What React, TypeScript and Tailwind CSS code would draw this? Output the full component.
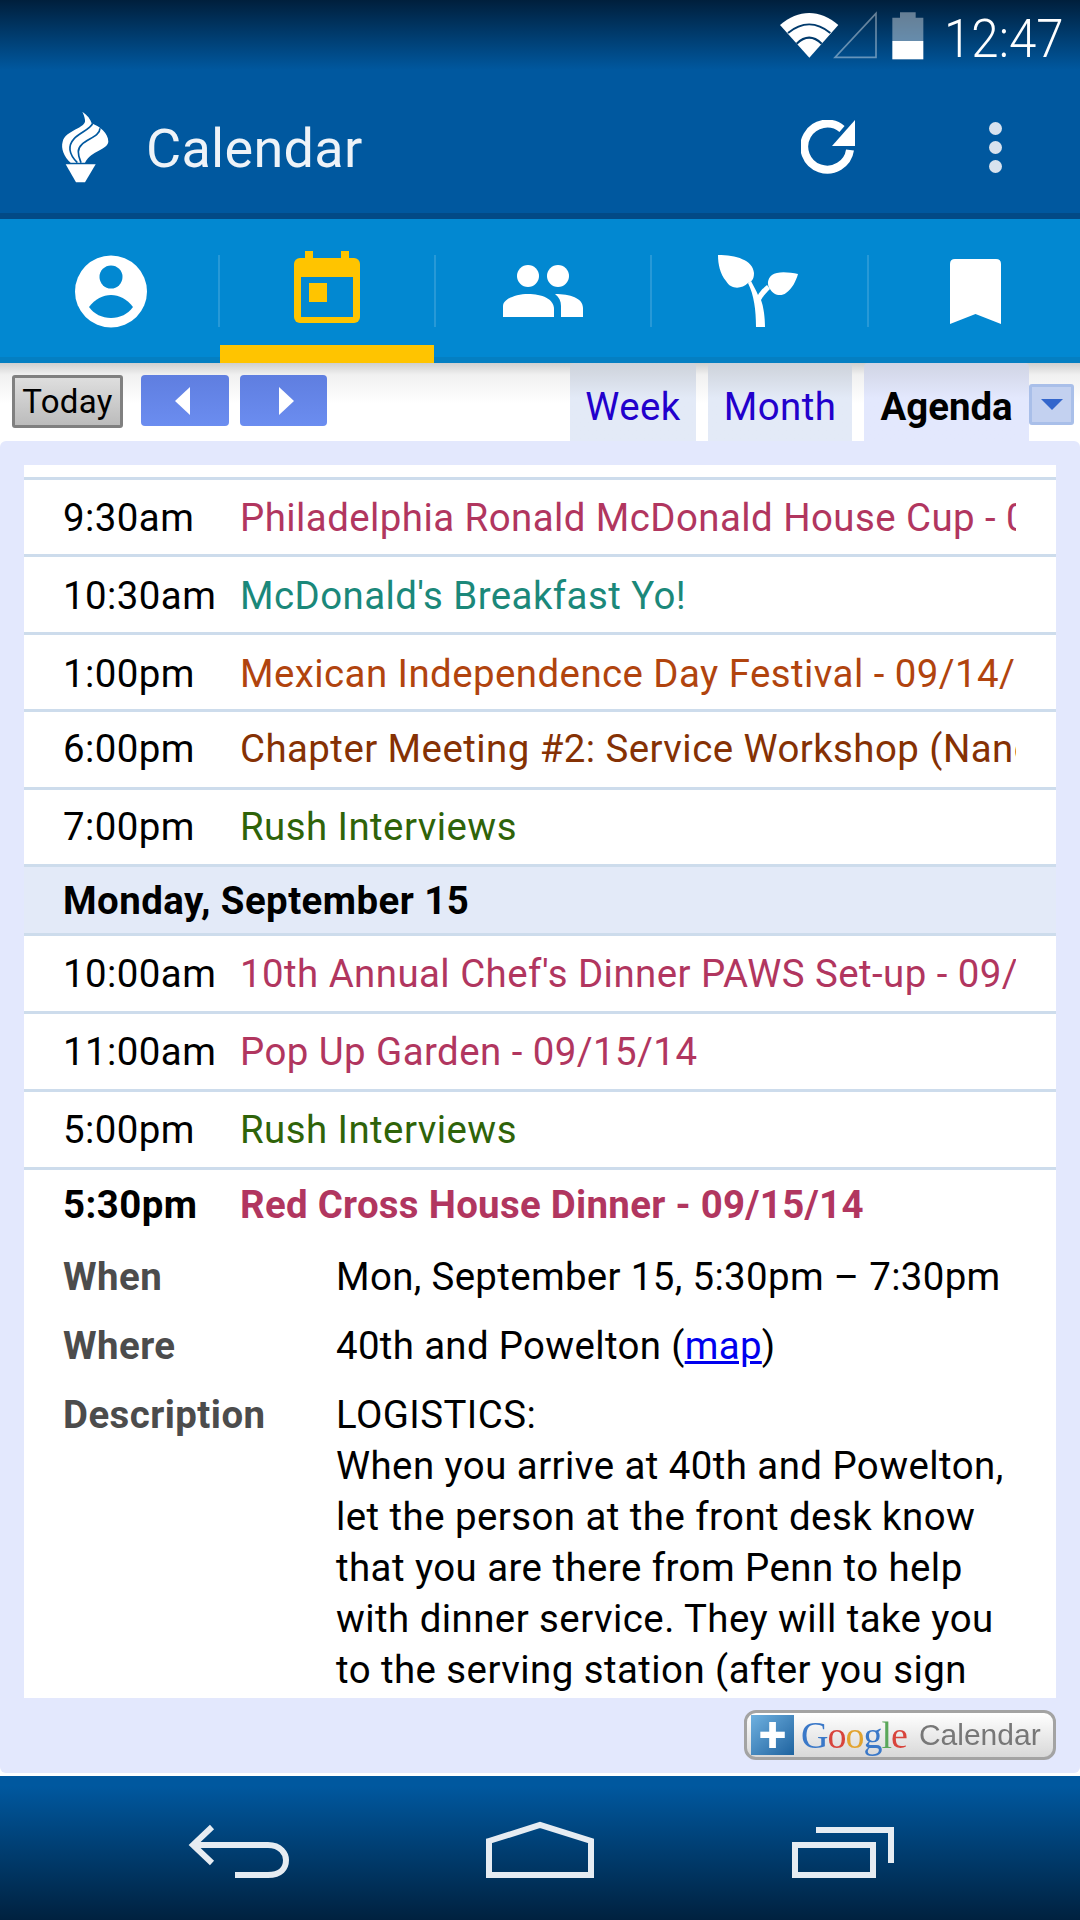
const agendaTop = [
  { time: "9:30am", title: "Philadelphia Ronald McDonald House Cup - 09/14/14", color: "text-[#b1365f]", nudge: "pt-[2px]" },
  { time: "10:30am", title: "McDonald's Breakfast Yo!", color: "text-[#1b887a]", nudge: "pt-[3px]" },
  { time: "1:00pm", title: "Mexican Independence Day Festival - 09/14/14", color: "text-[#b1440e]", nudge: "pt-[3px]" },
  { time: "6:00pm", title: "Chapter Meeting #2: Service Workshop (Nancy)", color: "text-[#853104]", nudge: "pb-[1px]" },
  { time: "7:00pm", title: "Rush Interviews", color: "text-[#2f6309]", nudge: "" },
];

const agendaMonday = [
  { time: "10:00am", title: "10th Annual Chef's Dinner PAWS Set-up - 09/15/14", color: "text-[#b1365f]", nudge: "" },
  { time: "11:00am", title: "Pop Up Garden - 09/15/14", color: "text-[#b1365f]", nudge: "" },
  { time: "5:00pm", title: "Rush Interviews", color: "text-[#2f6309]", nudge: "" },
];

const descriptionLines = [
  "LOGISTICS:",
  "When you arrive at 40th and Powelton,",
  "let the person at the front desk know",
  "that you are there from Penn to help",
  "with dinner service. They will take you",
  "to the serving station (after you sign",
  "in)",
];

function StatusIcons() {
  return (
    <svg width="170" height="65" viewBox="0 0 510 195">
      <path d="M30 60 C85 12 150 12 205 60 L118 158 Z" fill="#fff" />
      <path d="M54 84 C95 50 140 50 181 84 M80 116 C105 92 130 92 155 116" fill="none" stroke="#003a6c" strokeWidth="6" />
      <path d="M195 157 H318 V25 Z" fill="none" stroke="#fff" strokeOpacity="0.4" strokeWidth="5" />
      <path d="M390 22 H437 V38 H460 V108 H367 V38 H390 Z" fill="#fff" fillOpacity="0.4" />
      <rect x="367" y="108" width="93" height="55" fill="#fff" />
    </svg>
  );
}

function Torch() {
  return (
    <svg width="70" height="95" viewBox="0 0 210 285" className="mt-[4px]">
      <path
        d="M97 35 C112 45 122 58 125 70 C150 80 175 100 175 125 C172 150 125 150 105 188 L62 188 C42 170 32 145 38 125 C45 90 110 85 105 60 C104 50 100 42 97 35 Z"
        fill="#fff"
      />
      <path
        d="M128 70 C120 95 55 105 60 150 C62 165 72 178 82 188 M150 85 C150 115 85 120 85 155 C85 170 90 178 93 188"
        fill="none"
        stroke="#00589f"
        strokeWidth="5"
      />
      <path d="M47 193 H137 L105 247 H78 Z" fill="#fff" />
    </svg>
  );
}

function Refresh() {
  return (
    <svg width="54" height="54" viewBox="801 120 54 54">
      <path d="M842 129 A23 23 0 1 0 850 150" fill="none" stroke="#fff" strokeWidth="8" />
      <path d="M855 120 V146 H832 Z" fill="#fff" />
    </svg>
  );
}

function UserIcon() {
  return (
    <svg width="72" height="73" viewBox="75 254 72 73" className="ml-[4px]">
      <circle cx="111" cy="290.5" r="36" fill="#fff" />
      <circle cx="111" cy="276" r="11.5" fill="#0288d1" />
      <path d="M89 306 C95 298 103 294 111 294 C119 294 127 298 133 306 C128 313 120 317 111 317 C102 317 94 313 89 306 Z" fill="#0288d1" />
    </svg>
  );
}

function CalendarIcon() {
  return (
    <svg width="66" height="72" viewBox="294 251 66 72" className="mb-[8px]">
      <rect x="294" y="258" width="66" height="65" rx="6" fill="#ffc400" />
      <rect x="305" y="251" width="8" height="8" fill="#ffc400" />
      <rect x="341" y="251" width="8" height="8" fill="#ffc400" />
      <rect x="301" y="277" width="52" height="40" fill="#0288d1" />
      <rect x="309" y="283" width="18" height="19" fill="#ffc400" />
    </svg>
  );
}

function PeopleIcon() {
  return (
    <svg width="80" height="52" viewBox="503 265 80 52">
      <circle cx="528" cy="276" r="11" fill="#fff" />
      <circle cx="558" cy="276" r="11" fill="#fff" />
      <path d="M503 317 V306 C503 299 516 294 528 294 C542 294 554 299 554 309 V317 Z" fill="#fff" />
      <path d="M555 294 C570 294 583 298 583 308 V317 H561 V306 C561 301 559 297 555 294 Z" fill="#fff" />
    </svg>
  );
}

function SproutIcon() {
  return (
    <svg width="81" height="72" viewBox="717 255 81 72" className="mr-[2px]">
      <path d="M717 255 C735 255 752 260 753 273 C753 280 750 282 747 283 C741 289 730 290 725 281 C719 274 717 264 717 255 Z" fill="#fff" />
      <path d="M747 283 C753 295 755 310 755 327 H764 C764 315 762 305 760 300 C763 295 766 292 769 289 L766 285 C762 288 758 293 757 295 C755 290 752 285 750 281 Z" fill="#fff" />
      <path d="M797 274 C788 272 776 271 771 275 C766 279 766 285 769 289 C772 295 780 297 785 293 C791 289 795 281 797 274 Z" fill="#fff" />
    </svg>
  );
}

function BookmarkIcon() {
  return (
    <svg width="51" height="65" viewBox="950 258 51 65" className="ml-[2px]">
      <path d="M950 263 Q950 258 955 258 H996 Q1001 258 1001 263 V323 L975.5 313 L950 323 Z" fill="#fff" />
    </svg>
  );
}

function TabCell({ active, divider, children }: { active?: boolean; divider?: boolean; children: React.ReactNode }) {
  return (
    <div className="flex">
      {divider && <div className="mt-[36px] h-[72px] w-[2px] bg-white/15" />}
      <div className={`flex h-full flex-1 justify-center pt-[36px] ${active ? "border-b-[18px] border-[#ffc400]" : ""}`}>
        <div className="flex h-[72px] items-center">{children}</div>
      </div>
    </div>
  );
}

function AgendaRow({
  time,
  title,
  color,
  bold,
  nudge,
}: {
  time: string;
  title: string;
  color: string;
  bold?: boolean;
  nudge?: string;
}) {
  return (
    <div className={`flex h-[77.4px] items-center border-t-[3px] border-[#cddcec] pr-[40px] pl-[39px] ${nudge ?? ""}`}>
      <div className={`w-[177px] shrink-0 text-black ${bold ? "font-bold" : ""}`}>{time}</div>
      <div className={`overflow-hidden whitespace-nowrap ${color} ${bold ? "font-bold tracking-[0.3px]" : ""}`}>{title}</div>
    </div>
  );
}

function GoogleCalendarButton() {
  return (
    <div className="flex h-[50px] w-[312px] items-center overflow-hidden rounded-[12px] border-[3px] border-[#a3a3a3] bg-linear-to-b from-white to-[#d8d8d8] pl-[4px] tracking-normal blur-[0.5px]">
      <div className="flex h-[40px] w-[43px] shrink-0 items-center justify-center bg-linear-to-br from-[#6fb1e0] to-[#1d639f] text-[50px] leading-none font-bold text-white">
        +
      </div>
      <div className="ml-[7px] font-['Liberation_Serif',serif] text-[38px] leading-none tracking-[-1px]">
        <span className="text-[#3a78c8]">G</span>
        <span className="text-[#d8443c]">o</span>
        <span className="text-[#e2a32e]">o</span>
        <span className="text-[#3a78c8]">g</span>
        <span className="text-[#5aa75a]">l</span>
        <span className="text-[#d8443c]">e</span>
      </div>
      <div className="ml-[12px] font-['Liberation_Sans',sans-serif] text-[30px] leading-none text-[#777]">Calendar</div>
    </div>
  );
}

export default function App() {
  return (
    <div className="flex h-[1920px] w-[1080px] flex-col overflow-hidden bg-white font-['Roboto',sans-serif] text-[38.4px] tracking-[0.45px]">
      {/* status + action bar */}
      <div className="h-[213px] shrink-0 bg-[linear-gradient(#001f3c,#00589f_70px)] tracking-normal">
        <div className="flex h-[75px] items-start justify-end">
          <div className="mt-[5px]">
            <StatusIcons />
          </div>
          <div className="mt-[9px] ml-[4px] w-[136px] origin-left scale-x-[0.93] text-[53px] leading-[60px] font-light whitespace-nowrap text-white">
            12:47
          </div>
        </div>
        <div className="flex h-[138px] items-start pl-[50px]">
          <div className="mt-[21px]">
            <Torch />
          </div>
          <div className="mt-[44px] ml-[26px] w-[624px] text-[54px] leading-[60px] tracking-[0.3px] text-[#eef3f8]">Calendar</div>
          <div className="mt-[45px] ml-[31px]">
            <Refresh />
          </div>
          <div className="mt-[47px] ml-[134px] flex flex-col gap-[6px]">
            <div className="h-[13px] w-[13px] rounded-full bg-[#d8e2ee]" />
            <div className="h-[13px] w-[13px] rounded-full bg-[#d8e2ee]" />
            <div className="h-[13px] w-[13px] rounded-full bg-[#d8e2ee]" />
          </div>
        </div>
      </div>
      <div className="h-[6px] shrink-0 bg-[#024a86]" />

      {/* section tabs */}
      <div className="grid h-[144px] shrink-0 grid-cols-[218px_216px_216px_217px_213px] bg-[#0288d1] shadow-[inset_0_-6px_0_#047fc2]">
        <TabCell>
          <UserIcon />
        </TabCell>
        <TabCell active divider>
          <CalendarIcon />
        </TabCell>
        <TabCell divider>
          <PeopleIcon />
        </TabCell>
        <TabCell divider>
          <SproutIcon />
        </TabCell>
        <TabCell divider>
          <BookmarkIcon />
        </TabCell>
      </div>

      {/* calendar toolbar */}
      <div className="flex h-[78px] shrink-0 bg-[linear-gradient(#cfcfcf,#f1f1f1_12px,#fff_40px)]">
        <div className="mt-[12px] ml-[12px] flex h-[53px] w-[111px] items-center justify-center rounded-[3px] border-[3px] border-[#808080] bg-linear-to-b from-[#dedede] to-[#bcbcbc] text-[33px] tracking-[0.3px] text-black">
          Today
        </div>
        <div className="mt-[12px] ml-[18px] flex h-[51px] w-[88px] items-center justify-center rounded-[4px] bg-linear-to-b from-[#5f7ee0] to-[#6b8df0]">
          <div className="mr-[6px] h-0 w-0 border-y-[14px] border-r-[15px] border-y-transparent border-r-white" />
        </div>
        <div className="mt-[12px] ml-[11px] flex h-[51px] w-[87px] items-center justify-center rounded-[4px] bg-linear-to-b from-[#5f7ee0] to-[#6b8df0]">
          <div className="ml-[6px] h-0 w-0 border-y-[14px] border-l-[15px] border-y-transparent border-l-white" />
        </div>
        <div className="ml-[243px] flex w-[126px] items-center justify-center rounded-t-[4px] bg-linear-to-b from-[#cdd2da] to-[#e3eaf7] to-45% pt-[10px] text-[#2200cc]">
          Week
        </div>
        <div className="ml-[12px] flex w-[144px] items-center justify-center rounded-t-[4px] bg-linear-to-b from-[#cdd2da] to-[#e3eaf7] to-45% pt-[10px] text-[#2200cc]">
          Month
        </div>
        <div className="ml-[12px] flex w-[165px] items-center justify-center rounded-t-[4px] bg-linear-to-b from-[#d0d4e4] to-[#e3e8fd] to-45% pt-[10px] font-bold tracking-normal text-black">
          Agenda
        </div>
        <div className="mt-[21px] flex h-[41px] w-[45px] items-center justify-center rounded-[3px] border-[3px] border-[#a9bfe9] bg-[#c3d1f0]">
          <div className="h-0 w-0 border-x-[11px] border-t-[11px] border-x-transparent border-t-[#3366cc]" />
        </div>
      </div>

      {/* agenda panel */}
      <div className="flex h-[1332px] shrink-0 flex-col rounded-[6px] bg-[#e3e8fd] px-[24px] pt-[24px]">
        <div className="h-[1233px] shrink-0 overflow-hidden bg-white pt-[12px]">
          {agendaTop.map((row) => (
            <AgendaRow key={row.time} {...row} />
          ))}
          <div className="flex h-[69px] items-center border-t-[3px] border-[#cddcec] bg-[#e3eaf8] pt-[2px] pl-[39px] font-bold text-black">
            Monday, September 15
          </div>
          {agendaMonday.map((row) => (
            <div key={row.time} className="[&>div]:h-[78px]">
              <AgendaRow {...row} />
            </div>
          ))}
          <AgendaRow time="5:30pm" title="Red Cross House Dinner - 09/15/14" color="text-[#b1365f]" bold nudge="pb-[4px]" />
          <div className="mt-[7px] grid grid-cols-[273px_1fr] gap-y-[18px] pr-[40px] pl-[39px] leading-[51px] whitespace-nowrap text-black">
            <div className="font-bold text-[#4c4c4c]">When</div>
            <div className="tracking-[0.36px]">Mon, September 15, 5:30pm – 7:30pm</div>
            <div className="font-bold text-[#4c4c4c]">Where</div>
            <div className="tracking-[0.35px]">
              40th and Powelton (<span className="text-[#0000ee] underline">map</span>)
            </div>
            <div className="font-bold text-[#4c4c4c]">Description</div>
            <div>
              {descriptionLines.map((line) => (
                <div key={line}>{line}</div>
              ))}
            </div>
          </div>
        </div>
        <div className="mt-[12px] flex justify-end">
          <GoogleCalendarButton />
        </div>
      </div>
      <div className="h-[3px] shrink-0 bg-white" />

      {/* android nav */}
      <div className="flex h-[144px] shrink-0 bg-[linear-gradient(#00589f,#00589f_10px,#00213f)] pt-[42px] pl-[186px]">
        <svg width="108" height="64" viewBox="186 1818 108 64" fill="none" stroke="#e6ecf2" strokeWidth="6">
          <path d="M212 1827 L193 1845 L212 1863" />
          <path d="M194 1845 H268 C281 1845 286 1854 286 1860 C286 1868 281 1875 268 1875 H235" />
        </svg>
        <svg width="116" height="64" viewBox="482 1818 116 64" fill="none" stroke="#e6ecf2" strokeWidth="6" className="ml-[188px]">
          <path d="M489 1841 L540 1825 L591 1841 V1875 H489 Z" />
        </svg>
        <svg width="110" height="64" viewBox="788 1818 110 64" fill="none" stroke="#e6ecf2" strokeWidth="6" className="ml-[190px]">
          <rect x="795" y="1845" width="78" height="30" />
          <path d="M816 1830 H891 V1863" />
        </svg>
      </div>
    </div>
  );
}
